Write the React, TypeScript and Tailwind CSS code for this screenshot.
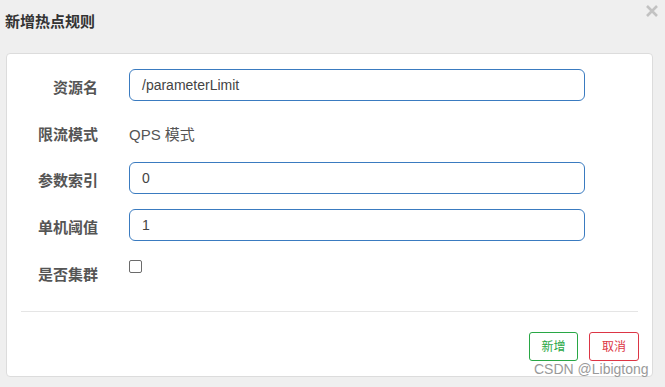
import React from "react";

const font = { fontFamily: '"Liberation Sans", "Noto Sans CJK SC", sans-serif' };

function Row({
  label,
  children,
  h = "h-[32px]",
}: {
  label: string;
  children: React.ReactNode;
  h?: string;
}) {
  return (
    <div className={`flex ${h} mb-[15px]`}>
      <div className="w-[91px] shrink-0 text-right pt-[9px] text-[15px] leading-[20px] font-bold text-[#555]">
        {label}
      </div>
      <div className="ml-[31px] flex-1">{children}</div>
    </div>
  );
}

function TextInput({ value }: { value: string }) {
  return (
    <div className="w-[456px] h-[32px] rounded-[6px] border border-[#3a7bc0] bg-white pl-[12px] flex items-center text-[14px] text-[#444]">
      {value}
    </div>
  );
}

export default function App() {
  return (
    <div
      className="relative w-[665px] h-[387px] bg-[#efefef] overflow-hidden"
      style={font}
    >
      <div className="h-[45px] flex items-center pl-[5px] text-[15px] font-bold text-[#333]">
        新增热点规则
      </div>
      <svg
        className="absolute left-[646px] top-[5px]"
        width="12"
        height="12"
        viewBox="0 0 12 12"
      >
        <path d="M1 1 L11 11 M11 1 L1 11" stroke="#c2c2c2" strokeWidth="2.6" />
      </svg>

      <div className="ml-[6px] mt-[8px] w-[647px] h-[324px] bg-white border border-[#dcdcdc] rounded-[4px] flex flex-col">
        <div className="pt-[15px]">
          <Row label="资源名">
            <TextInput value="/parameterLimit" />
          </Row>
          <Row label="限流模式" h="h-[31px]">
            <div className="pt-[9px] text-[15px] leading-[20px] text-[#555]">
              QPS 模式
            </div>
          </Row>
          <Row label="参数索引">
            <TextInput value="0" />
          </Row>
          <Row label="单机阈值">
            <TextInput value="1" />
          </Row>
          <div className="flex h-[32px]">
            <div className="w-[91px] shrink-0 text-right pt-[9px] text-[15px] leading-[20px] font-bold text-[#555]">
              是否集群
            </div>
            <div className="ml-[31px] pt-[4px]">
              <div className="w-[13px] h-[13px] rounded-[2px] border border-[#6b6b6b] bg-white" />
            </div>
          </div>
        </div>
        <div className="mx-[14px] mt-[23px] h-px bg-[#e5e5e5]" />
        <div className="flex justify-end gap-[11px] mr-[13px] mt-[20px]">
          <div className="w-[49px] h-[29px] rounded-[3px] border border-[#28a745] text-[#28a745] text-[12px] flex items-center justify-center bg-white">
            新增
          </div>
          <div className="w-[50px] h-[29px] rounded-[3px] border border-[#dc3545] text-[#dc3545] text-[12px] flex items-center justify-center bg-white">
            取消
          </div>
        </div>
      </div>

      <div className="absolute left-[534px] top-[361px] text-[14px] leading-[16px] text-[#9a9a9a] whitespace-nowrap">
        CSDN @Libigtong
      </div>
    </div>
  );
}
